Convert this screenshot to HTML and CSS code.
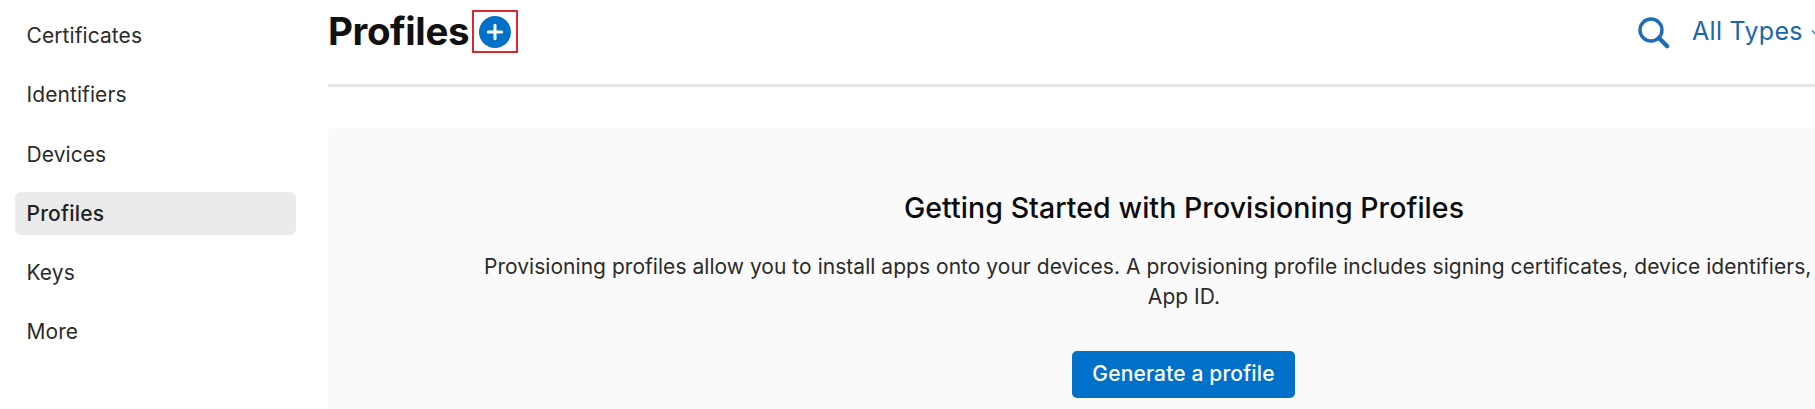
FILE: index.html
```html
<!DOCTYPE html>
<html lang="en">
<head>
<meta charset="utf-8">
<title>Profiles</title>
<link rel="stylesheet" href="styles.css">
</head>
<body>
<div class="page">
  <nav class="sidebar">
    <a class="nav-item">Certificates</a>
    <a class="nav-item">Identifiers</a>
    <a class="nav-item">Devices</a>
    <a class="nav-item active">Profiles</a>
    <a class="nav-item">Keys</a>
    <a class="nav-item">More</a>
  </nav>
  <main class="content">
    <header class="header">
      <h1 class="title">Profiles</h1>
      <span class="add">
        <svg width="32" height="32" viewBox="0 0 32 32"><circle cx="16" cy="16" r="16" fill="#0070c9"/><path d="M16 9.3v13.4M9.3 16h13.4" stroke="#fff" stroke-width="3" stroke-linecap="round"/></svg>
      </span>
      <div class="filters">
        <svg class="search" width="34" height="34" viewBox="0 0 34 34" fill="none" stroke="#1b6db8"><circle cx="14" cy="14" r="11" stroke-width="3.4"/><path d="M22 22l8.2 8.2" stroke-width="4.4" stroke-linecap="round"/></svg>
        <span class="types">All Types</span>
        <svg class="chevron" width="12" height="8" viewBox="0 0 12 8" fill="none" stroke="#4d8fc8" stroke-width="1.6"><path d="M1 1.5l5 5 5-5"/></svg>
      </div>
    </header>
    <section class="card">
      <h2 class="card-title">Getting Started with Provisioning Profiles</h2>
      <p class="card-text"><span class="line">Provisioning profiles allow you to install apps onto your devices. A provisioning profile includes signing certificates, device identifiers,</span> App ID.</p>
      <a class="button">Generate a profile</a>
    </section>
  </main>
</div>
</body>
</html>
```
FILE: styles.css
```css
* { box-sizing: border-box; }
html, body { margin: 0; height: 409px; overflow: hidden; background: #fff; }
body { font-family: Inter, "Liberation Sans", sans-serif; color: #222; }
.page { display: flex; width: 100%; height: 409px; overflow: hidden; }
.sidebar { width: 328px; flex: none; padding: 14px 32px 0 15px; display: flex; flex-direction: column; gap: 16.3px; }
.nav-item { height: 43px; flex: none; line-height: 43px; padding-left: 11.5px; border-radius: 6px; font-size: 21px; color: #2b2b2b; letter-spacing: 0.08px; font-weight: 370; }
.nav-item.active { background: #ebebeb; font-weight: 500; color: #222; letter-spacing: 0.2px; }
.content { flex: 1; min-width: 0; }
.header { height: 87px; border-bottom: 3px solid #e4e4e4; display: flex; align-items: flex-start; }
.title { margin: 7px 0 0; width: 144px; flex: none; font-size: 38.5px; line-height: 48px; font-weight: 700; color: #111; letter-spacing: -0.4px; white-space: nowrap; }
.add { margin-top: 10px; width: 46px; height: 43px; border: 2px solid #d42a30; display: flex; align-items: center; justify-content: center; flex: none; }
.add svg { margin-right: 1px; }
.filters { display: flex; flex: none; margin-left: 1119px; }
.search { margin-top: 16px; flex: none; }
.types { margin: 12px 0 0 21px; width: 119px; flex: none; font-size: 25px; line-height: 38px; color: #1b67aa; letter-spacing: 0.3px; font-weight: 370; white-space: nowrap; }
.chevron { margin-top: 29px; flex: none; }
.card { margin-top: 41px; height: 300px; background: #fafafa; border-radius: 6px 0 0 0; padding: 62px 0 0 156px; }
.card-title { margin: 0; width: 1400px; text-align: center; font-size: 28.5px; line-height: 36px; font-weight: 500; color: #0c0c0c; letter-spacing: 0.06px; }
.card-text { margin: 26px 0 0; width: 1400px; text-align: center; font-size: 21px; line-height: 30px; color: #2b2b2b; font-weight: 370; letter-spacing: 0.035px; }
.line { display: block; text-align: left; white-space: nowrap; }
.button { display: block; margin: 39px 0 0 588px; width: 223px; height: 47px; line-height: 45px; border-radius: 5px; background: #0070c9; color: #fff; text-align: center; font-size: 21px; font-weight: 500; letter-spacing: 0.15px; white-space: nowrap; }
```
